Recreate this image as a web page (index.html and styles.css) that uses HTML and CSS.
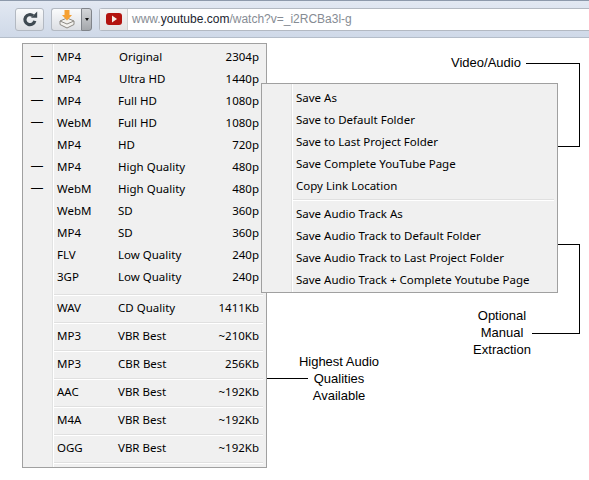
FILE: index.html
```html
<!DOCTYPE html>
<html lang="en">
<head>
  <meta charset="UTF-8">
  <title>Video download menu</title>
  <link rel="stylesheet" href="styles.css">
</head>
<body>
  <div class="toolbar">
    <button class="tool-btn reload">
      <svg width="18" height="18" viewBox="0 0 18 18"><path d="M13.800 10.800a5 5 0 1 1-1.700-5" fill="none" stroke="#3f4a52" stroke-width="3.200"/><path d="M10 7.800h6.200V1.600z" fill="#3f4a52"/></svg>
    </button>
    <div class="split-btn">
      <button class="tool-btn ext">
        <svg width="20" height="20" viewBox="0 0 20 20"><path d="M3 12l7-3 7 3v3.500L10 19l-7-3.500z" fill="#f2f1ee" stroke="#8d8a84"/><path d="M3 12l7 3 7-3" fill="none" stroke="#8d8a84"/><path d="M7.500 1h5v5h2.500l-5 5.500L5 6h2.500z" fill="#f5a032"/></svg>
      </button>
      <button class="tool-btn caret"><span class="caret-tri"></span></button>
    </div>
    <div class="address">
      <div class="site-icon">
        <svg width="16" height="12" viewBox="0 0 16 12"><rect width="16" height="12" rx="3" fill="#b3140f"/><path d="M6 2.500l5 3.500-5 3.500z" fill="#f8efe8"/></svg>
      </div>
      <div class="url">www.<b>youtube.com</b>/watch?v=_i2RCBa3l-g</div>
    </div>
  </div>

  <div class="stage">
    <div class="note note-video">Video/Audio</div>
    <div class="bracket bracket-video"></div>

    <div class="note note-manual">Optional<br>Manual<br>Extraction</div>
    <div class="bracket bracket-manual"></div>

    <div class="note note-audio">Highest Audio<br>Qualities<br>Available</div>
    <div class="line-audio"></div>

    <div class="menu main-menu">
      <div class="row"><span class="mark">—</span><span class="fmt">MP4</span><span class="qual">Original</span><span class="res">2304p</span></div>
      <div class="row"><span class="mark">—</span><span class="fmt">MP4</span><span class="qual">Ultra HD</span><span class="res">1440p</span></div>
      <div class="row"><span class="mark">—</span><span class="fmt">MP4</span><span class="qual nudge">Full HD</span><span class="res">1080p</span></div>
      <div class="row"><span class="mark">—</span><span class="fmt">WebM</span><span class="qual nudge">Full HD</span><span class="res">1080p</span></div>
      <div class="row"><span class="mark"></span><span class="fmt">MP4</span><span class="qual nudge">HD</span><span class="res">720p</span></div>
      <div class="row"><span class="mark">—</span><span class="fmt">MP4</span><span class="qual nudge">High Quality</span><span class="res">480p</span></div>
      <div class="row"><span class="mark">—</span><span class="fmt">WebM</span><span class="qual nudge">High Quality</span><span class="res">480p</span></div>
      <div class="row"><span class="mark"></span><span class="fmt">WebM</span><span class="qual nudge">SD</span><span class="res">360p</span></div>
      <div class="row"><span class="mark"></span><span class="fmt">MP4</span><span class="qual nudge">SD</span><span class="res">360p</span></div>
      <div class="row"><span class="mark"></span><span class="fmt">FLV</span><span class="qual nudge">Low Quality</span><span class="res">240p</span></div>
      <div class="row"><span class="mark"></span><span class="fmt">3GP</span><span class="qual nudge">Low Quality</span><span class="res">240p</span></div>
      <div class="sep first-sep"></div>
      <div class="row audio"><span class="mark"></span><span class="fmt">WAV</span><span class="qual nudge">CD Quality</span><span class="res">1411Kb</span></div>
      <div class="sep"></div>
      <div class="row audio"><span class="mark"></span><span class="fmt">MP3</span><span class="qual nudge">VBR Best</span><span class="res">~210Kb</span></div>
      <div class="sep"></div>
      <div class="row audio"><span class="mark"></span><span class="fmt">MP3</span><span class="qual nudge">CBR Best</span><span class="res">256Kb</span></div>
      <div class="sep"></div>
      <div class="row audio"><span class="mark"></span><span class="fmt">AAC</span><span class="qual nudge">VBR Best</span><span class="res">~192Kb</span></div>
      <div class="sep"></div>
      <div class="row audio"><span class="mark"></span><span class="fmt">M4A</span><span class="qual nudge">VBR Best</span><span class="res">~192Kb</span></div>
      <div class="sep"></div>
      <div class="row audio"><span class="mark"></span><span class="fmt">OGG</span><span class="qual nudge">VBR Best</span><span class="res">~192Kb</span></div>
      <div class="sep"></div>
    </div>

    <div class="menu sub-menu">
      <div class="sub-item">Save As</div>
      <div class="sub-item">Save to Default Folder</div>
      <div class="sub-item">Save to Last Project Folder</div>
      <div class="sub-item">Save Complete YouTube Page</div>
      <div class="sub-item">Copy Link Location</div>
      <div class="sep sub-sep"></div>
      <div class="sub-item">Save Audio Track As</div>
      <div class="sub-item">Save Audio Track to Default Folder</div>
      <div class="sub-item">Save Audio Track to Last Project Folder</div>
      <div class="sub-item">Save Audio Track + Complete Youtube Page</div>
    </div>
  </div>
</body>
</html>
```

FILE: styles.css
```css
* {
  box-sizing: border-box;
}

body {
  margin: 0;
  height: 480px;
  overflow: hidden;
  background-color: #fff;
  font-family: "Noto Sans", sans-serif;
  color: #000;
}

.toolbar {
  display: flex;
  align-items: center;
  gap: 7px;
  height: 38px;
  padding: 0 0 0 15px;
  border-top: 1px solid #8d99ab;
  border-bottom: 1px solid #b4bdc9;
  background: linear-gradient(#e2e8f2, #cfd9e8);
}

.tool-btn {
  display: flex;
  align-items: center;
  justify-content: center;
  height: 23px;
  padding: 0;
  border: 1px solid #b3b9c2;
  border-radius: 3px;
  background: linear-gradient(#fafbfc, #dcdfe4);
}

.reload {
  width: 29px;
}

.split-btn {
  display: flex;
}

.ext {
  width: 30px;
  border-right: none;
  border-radius: 3px 0 0 3px;
}

.caret {
  width: 11px;
  border-color: #80848a;
  border-radius: 0 3px 3px 0;
  background: linear-gradient(#d4d6d9, #a4a7ab);
}

.caret-tri {
  border-top: 3px solid #111;
  border-left: 2.500px solid transparent;
  border-right: 2.500px solid transparent;
}

.address {
  display: flex;
  flex: 1;
  height: 23px;
  border: 1px solid #b3b9c2;
  border-right: none;
  border-radius: 3px 0 0 3px;
  background-color: #fff;
}

.site-icon {
  display: flex;
  align-items: center;
  justify-content: center;
  width: 28px;
  background: linear-gradient(#f4f4f4, #e4e4e4);
  border-right: 1px solid #d0d0d0;
}

.url {
  padding-left: 4px;
  font-family: "Liberation Sans", sans-serif;
  font-size: 12px;
  line-height: 21px;
  color: #868c94;
}

.url b {
  font-weight: normal;
  color: #1c2530;
}

.stage {
  position: relative;
}

.menu {
  background-color: #f0f0f0;
  border: 1px solid #a0a0a0;
  font-size: 11.500px;
  background-image: linear-gradient(#e2e3e3, #e2e3e3), linear-gradient(#fff, #fff);
  background-repeat: no-repeat;
  background-size: 1px 100%;
}

.main-menu {
  position: absolute;
  left: 22px;
  top: 5px;
  width: 245px;
  height: 425px;
  padding: 1px 3px 0 0;
  background-position: 29px 0, 30px 0;
}

.row {
  display: flex;
  align-items: center;
  height: 22px;
}

.row.audio {
  height: 26px;
  padding-bottom: 4px;
}

.mark {
  width: 34px;
  padding-left: 8px;
  font-family: "Liberation Sans", sans-serif;
  font-size: 12px;
}

.fmt {
  width: 62px;
}

.qual {
  flex: 1;
}

.nudge {
  margin-left: -1px;
}

.res {
  padding-right: 4px;
}

.sep {
  height: 2px;
  margin-left: 31px;
  border-top: 1px solid #e0e0e0;
  border-bottom: 1px solid #fff;
}

.first-sep {
  margin-top: 7px;
}

.sub-menu {
  position: absolute;
  left: 261px;
  top: 45px;
  width: 297px;
  height: 210px;
  padding: 3px 3px 0 0;
  background-position: 29px 0, 30px 0;
}

.sub-item {
  height: 22px;
  padding-left: 34px;
  line-height: 22px;
}

.sub-sep {
  margin: 2px 0 2px 31px;
}

.note {
  position: absolute;
  font-family: "Liberation Sans", sans-serif;
  font-size: 13px;
  line-height: 17px;
  text-align: center;
  color: #000;
}

.note-video {
  left: 451px;
  top: 16px;
}

.note-manual {
  left: 470px;
  top: 269px;
  width: 64px;
}

.note-audio {
  left: 297px;
  top: 315px;
  width: 84px;
}

.bracket {
  position: absolute;
  border: 1px solid #000;
  border-left: none;
}

.bracket-video {
  left: 526px;
  top: 25px;
  width: 54px;
  height: 84px;
}

.bracket-manual {
  left: 532px;
  top: 206px;
  width: 48px;
  height: 90px;
}

.line-audio {
  position: absolute;
  left: 267px;
  top: 340px;
  width: 41px;
  height: 1px;
  background-color: #000;
}
```
